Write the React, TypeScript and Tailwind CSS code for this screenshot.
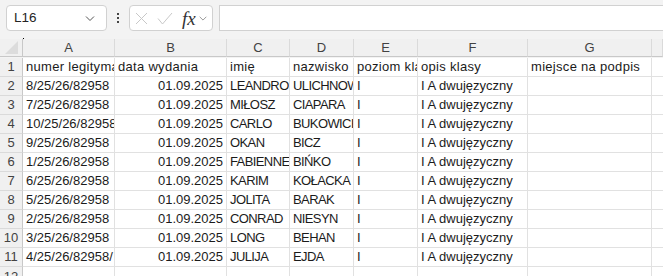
import React from 'react';

const cols = ['A', 'B', 'C', 'D', 'E', 'F', 'G', ''];

type Row = [string, string, string, string, string, string, string];

const rows: Row[] = [
  ['numer legitymacji', 'data wydania', 'imię', 'nazwisko', 'poziom klasy', 'opis klasy', 'miejsce na podpis'],
  ['8/25/26/82958', '01.09.2025', 'LEANDRO', 'ULICHNOWSKI', 'I', 'I A dwujęzyczny', ''],
  ['7/25/26/82958', '01.09.2025', 'MIŁOSZ', 'CIAPARA', 'I', 'I A dwujęzyczny', ''],
  ['10/25/26/82958', '01.09.2025', 'CARLO', 'BUKOWICKI', 'I', 'I A dwujęzyczny', ''],
  ['9/25/26/82958', '01.09.2025', 'OKAN', 'BICZ', 'I', 'I A dwujęzyczny', ''],
  ['1/25/26/82958', '01.09.2025', 'FABIENNE', 'BIŃKO', 'I', 'I A dwujęzyczny', ''],
  ['6/25/26/82958', '01.09.2025', 'KARIM', 'KOŁACKA', 'I', 'I A dwujęzyczny', ''],
  ['5/25/26/82958', '01.09.2025', 'JOLITA', 'BARAK', 'I', 'I A dwujęzyczny', ''],
  ['2/25/26/82958', '01.09.2025', 'CONRAD', 'NIESYN', 'I', 'I A dwujęzyczny', ''],
  ['3/25/26/82958', '01.09.2025', 'LONG', 'BEHAN', 'I', 'I A dwujęzyczny', ''],
  ['4/25/26/82958/', '01.09.2025', 'JULIJA', 'EJDA', 'I', 'I A dwujęzyczny', ''],
];

const gridCols = 'grid-cols-[23px_92px_112px_63px_64px_64px_110px_124px_1fr]';

function Chevron({ className }: { className?: string }) {
  return (
    <svg className={className} viewBox="0 0 12 12" fill="none" stroke="currentColor" strokeWidth={1}>
      <path d="M2 4.5l4 4 4-4" />
    </svg>
  );
}

export default function App() {
  return (
    <div
      className="w-[663px] h-[276px] overflow-hidden bg-[#f3f3f3] text-[13px]"
      style={{ fontFamily: '"Liberation Sans", Arial, sans-serif' }}
    >
      {/* Formula bar */}
      <div className="relative h-[39px] flex items-start pt-[5px] pl-[6px]">
        <div className="w-[101px] h-[26px] bg-white border border-[#d1d1d1] rounded-[4px] flex items-center justify-between pl-[7px] pr-[10px] text-[13.5px] text-[#242424]">
          <span>L16</span>
          <Chevron className="w-[12px] h-[12px] text-[#555]" />
        </div>
        <div className="w-[22px] h-[26px] flex flex-col items-center justify-center gap-[2px]">
          <span className="w-[2px] h-[2px] bg-[#444]" />
          <span className="w-[2px] h-[2px] bg-[#444]" />
          <span className="w-[2px] h-[2px] bg-[#444]" />
        </div>
        <div className="w-[84px] h-[26px] bg-white border border-[#d1d1d1] rounded-[4px] flex items-center pl-[5px] gap-[9px]">
          <svg className="w-[13px] h-[13px] text-[#c8c8c8]" viewBox="0 0 13 13" fill="none" stroke="currentColor" strokeWidth={1}>
            <path d="M1 1l11 11M12 1L1 12" />
          </svg>
          <svg className="w-[16px] h-[13px] text-[#c8c8c8]" viewBox="0 0 16 13" fill="none" stroke="currentColor" strokeWidth={1}>
            <path d="M1 6.5l4.5 5.5L15 1" />
          </svg>
          <div className="flex items-center gap-[2px]">
            <span
              className="italic text-[19px] leading-none text-[#333]"
              style={{ fontFamily: '"Liberation Serif", "Times New Roman", serif' }}
            >
              fx
            </span>
            <Chevron className="w-[10px] h-[10px] text-[#888]" />
          </div>
        </div>
        <div className="flex-1 h-[26px] ml-[6px] bg-white border border-[#d1d1d1] border-r-0" />
        <span className="absolute left-[23px] top-[38px] w-px h-px bg-black" />
      </div>

      {/* Sheet */}
      <div className={`grid ${gridCols} auto-rows-[19px]`}>
        {/* header row */}
        <div className="h-[18px] relative border-r border-b border-[#c8c8c8] bg-[#f0f0f0]">
          <div className="absolute right-[4px] bottom-[2px] w-0 h-0 border-l-[13px] border-l-transparent border-b-[13px] border-b-[#dcdcdc]" />
        </div>
        {cols.map((c, i) => (
          <div
            key={i}
            className="h-[18px] flex items-center justify-center border-r border-b border-r-[#dadada] border-b-[#c8c8c8] bg-[#f0f0f0] text-[#424242] text-[13px]"
          >
            {c}
          </div>
        ))}

        {rows.map((r, ri) => (
          <React.Fragment key={ri}>
            <div className="flex items-center justify-center bg-[#f0f0f0] border-r border-b border-r-[#c8c8c8] border-b-[#dadada] text-[#424242] text-[13px]">
              {ri + 1}
            </div>
            {r.map((v, ci) => (
              <div
                key={ci}
                className={`flex items-center overflow-hidden whitespace-nowrap bg-white border-r border-b border-[#e1e1e1] text-[#1b1b1b] ${
                  ci === 1 && ri > 0 ? 'justify-end pr-[3px]' : 'pl-[3px]'
                } ${(ci === 2 || ci === 3) && ri > 0 ? 'tracking-[-0.6px]' : ''} ${
                  ri === 0 ? 'tracking-[0.3px]' : ''
                }`}
              >
                {v}
              </div>
            ))}
            <div className="bg-white border-b border-[#e1e1e1]" />
          </React.Fragment>
        ))}

        {/* row 12 */}
        <div className="flex items-center justify-center bg-[#f0f0f0] border-r border-r-[#c8c8c8] text-[#424242] text-[13px]">
          12
        </div>
        {Array.from({ length: 7 }).map((_, i) => (
          <div key={i} className="bg-white border-r border-[#e1e1e1]" />
        ))}
        <div className="bg-white" />
      </div>
    </div>
  );
}
